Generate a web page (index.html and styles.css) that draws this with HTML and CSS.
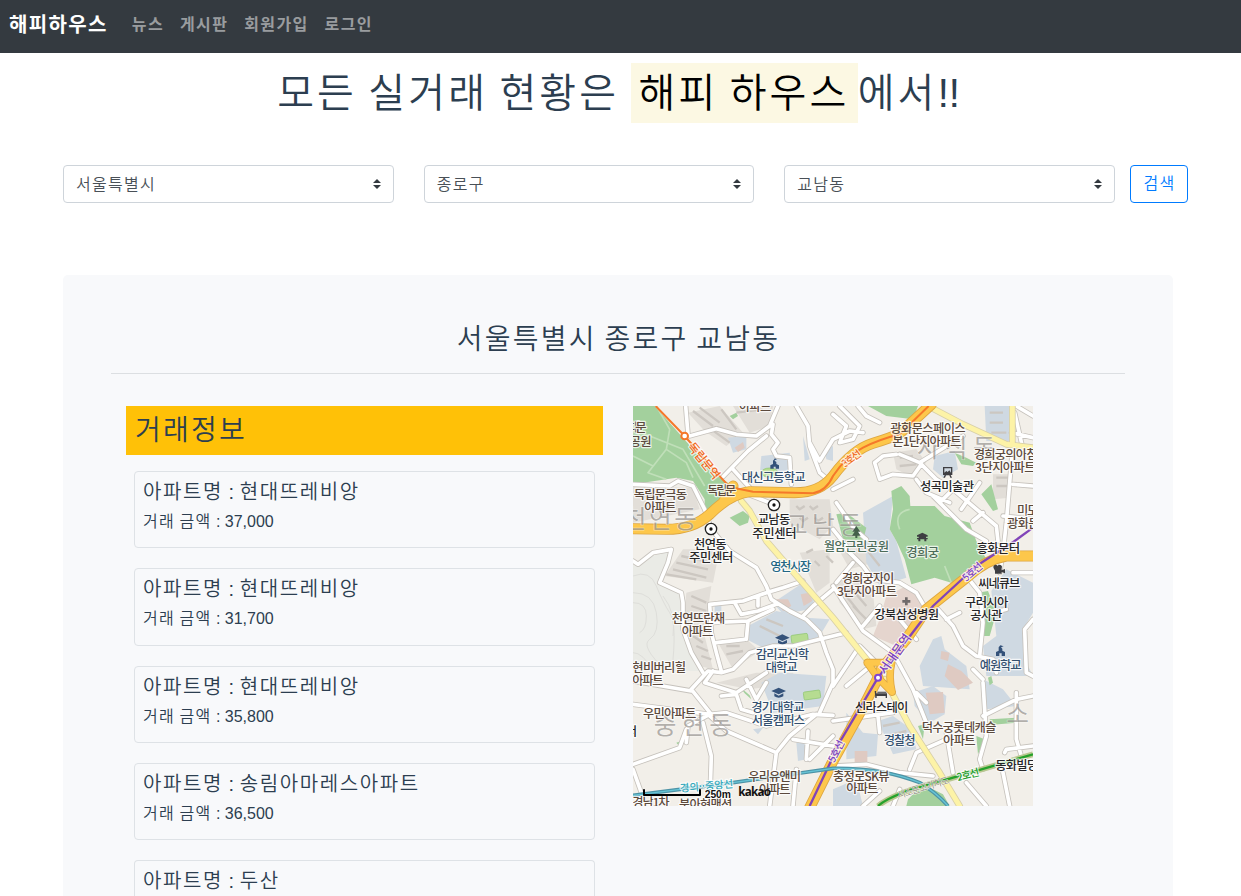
FILE: index.html
```html
<!DOCTYPE html>
<html lang="ko">
<head>
<meta charset="utf-8">
<title>해피하우스</title>
<link rel="stylesheet" href="styles.css">
</head>
<body>
<nav class="navbar">
  <a class="brand">해피하우스</a>
  <ul class="nav-list"><li>뉴스</li><li>게시판</li><li>회원가입</li><li>로그인</li></ul>
</nav>
<main class="container">
  <h1 class="headline"><span class="ko">모든</span> <span class="ko">실거래</span> <span class="ko">현황은</span> <mark class="mark"><span class="ko">해피</span> <span class="ko">하우스</span></mark><span class="ko">에서</span>!!</h1>
  <form class="search">
    <div class="select"><span class="ko">서울특별시</span><svg class="caret" viewBox="0 0 4 5"><path d="M2 0L0 2h4zm0 5L0 3h4z"/></svg></div>
    <div class="select"><span class="ko">종로구</span><svg class="caret" viewBox="0 0 4 5"><path d="M2 0L0 2h4zm0 5L0 3h4z"/></svg></div>
    <div class="select"><span class="ko">교남동</span><svg class="caret" viewBox="0 0 4 5"><path d="M2 0L0 2h4zm0 5L0 3h4z"/></svg></div>
    <button class="btn" type="button"><span class="ko">검색</span></button>
  </form>
  <section class="panel">
    <h2 class="region"><span class="ko">서울특별시</span> <span class="ko">종로구</span> <span class="ko">교남동</span></h2>
    <div class="columns">
      <div class="deals">
        <h3 class="deals-title"><span class="ko">거래정보</span></h3>
        <article class="card"><h4><span class="ko">아파트명</span> : <span class="ko">현대뜨레비앙</span></h4><p><span class="ko">거래</span> <span class="ko">금액</span> : 37,000</p></article>
        <article class="card"><h4><span class="ko">아파트명</span> : <span class="ko">현대뜨레비앙</span></h4><p><span class="ko">거래</span> <span class="ko">금액</span> : 31,700</p></article>
        <article class="card"><h4><span class="ko">아파트명</span> : <span class="ko">현대뜨레비앙</span></h4><p><span class="ko">거래</span> <span class="ko">금액</span> : 35,800</p></article>
        <article class="card"><h4><span class="ko">아파트명</span> : <span class="ko">송림아마레스아파트</span></h4><p><span class="ko">거래</span> <span class="ko">금액</span> : 36,500</p></article>
        <article class="card last"><h4><span class="ko">아파트명</span> : <span class="ko">두산</span></h4></article>
      </div>
      <svg class="map" viewBox="0 0 1200 1200">
        <rect class="land" width="1200" height="1200"/>
        <!-- built-up blocks -->
        <g class="block">
          <path d="M165 20L260 0 330 80 280 120 215 75zM0 240L180 245 200 310 100 330 0 350zM95 510L150 430 260 430 240 530zM160 560L235 540 225 610 215 690 240 790 200 780 150 660zM600 400L700 400 720 470 650 490zM600 530L650 500 720 560 730 660 690 670 620 590zM780 140L850 130 880 170 830 210 790 190zM255 710L340 700 380 735 300 790zM1080 205L1130 205 1130 275 1080 280zM470 280L590 280 600 360 560 400 470 350zM500 440L590 430 590 530 550 560zM300 0L420 0 410 60 350 80zM250 830L370 800 480 800 490 830 350 850z"/>
        </g>
        <path class="hill" d="M0 470L60 450 115 430 80 530 150 570 150 680 200 795 0 795z"/>
        <g class="contour"><path d="M0 510Q50 490 70 540T110 620T120 760L140 795M0 560Q60 560 70 620T50 700T100 795M0 590Q40 590 40 630T20 680M0 740Q30 740 60 795M90 570Q130 620 120 690"/></g>
        <g class="water">
          <path d="M385 150L470 140 480 200 380 210zM285 95L340 90 340 130 300 140zM1055 0L1130 0 1130 105 1060 105zM905 150L965 135 975 190 930 215 900 190zM690 320L780 270 770 370 790 405 820 515 740 540 700 470zM420 590L510 530 550 570 530 610 450 625zM345 660L430 615 520 635 590 640 560 690 500 720 400 730 340 700zM245 600L265 600 265 650 245 645z"/>
          <path d="M1075 555L1120 490 1200 530 1200 620 1170 670 1175 760 1200 810 1060 810 1050 720 1090 690zM900 700L925 690 935 730 1000 780 1010 850 870 840 860 780zM840 860L900 840 940 870 935 925 890 950 845 900zM640 920L690 980 735 985 730 1050 640 1060zM735 945L780 930 835 970 850 1030 780 1045zM1050 820L1110 850 1150 900 1060 910zM600 1150L670 1120 690 1200 600 1200zM385 830L440 800 580 810 570 900 420 920zM360 970L390 965 375 985zM490 1010L515 1010 520 1060 495 1065zM510 90L530 160 515 165zM575 130L600 120 600 165 580 160z"/>
        </g>
        <g class="pink"><path d="M740 640L760 570 820 540 860 560 870 620 830 690 790 720 720 690z" opacity=".7"/><path d="M305 125L330 108 335 125 315 138zM430 580L465 580 475 600 450 615zM503 565L528 560 538 585 512 600zM925 735L950 740 945 765 922 758zM945 775L985 795 1020 830 975 852 935 810zM878 860L930 858 935 920 890 925zM665 1035L703 1035 703 1068 665 1068z"/></g>
        <g class="park">
          <path d="M0 0L65 0 250 208 300 240 240 325 215 310 215 280 180 225 130 215 0 235zM290 335L330 315 350 330 345 350 320 360zM775 255L805 240 830 270 832 300 905 300 935 330 1010 350 1030 405 1060 460 955 530 905 515 835 535 815 460 790 405 770 370 780 310zM965 140L1000 155 1030 170 1020 180 985 175zM1045 265L1075 235 1095 310 1080 315zM705 0L855 0 840 40 760 30zM610 325L640 320 700 365 690 405 630 400zM1035 560L1065 555 1090 620 1070 690 1050 690 1055 640zM1030 990L1055 1000 1035 1045zM1070 940L1150 935 1150 950 1070 957zM825 1180L850 1155 900 1150 930 1165 950 1200 820 1200zM320 842L350 868 355 880 335 862zM130 1010L145 1005 143 1025zM290 30L310 20 315 30 300 40zM1065 815L1075 810 1080 830 1070 838zM855 960L875 955 870 1000z"/>
        </g>
        <g class="parkpath"><path d="M0 70L150 130 215 240M70 0L110 70 100 130 45 200 100 220M100 130L160 170 180 215M0 150L60 180M830 310Q780 320 800 370M935 480L955 530"/></g>
        <g class="field"><rect x="475" y="685" width="50" height="26" rx="4" transform="rotate(-8 500 698)"/><rect x="512" y="855" width="50" height="24" rx="4" transform="rotate(-8 537 867)"/><ellipse cx="410" cy="200" rx="25" ry="14"/></g>
        <!-- apartment buildings -->
        <g class="bldg"><path d="M180 15L240 60M200 5L260 50M235 70L290 110M265 10L310 70M120 490L220 515M130 470L225 490M145 450L235 470M100 505L190 520M175 570L220 590M175 600L220 615M170 630L215 650M165 655L205 680M180 690L210 710M190 720L225 735M205 750L235 760M620 545L680 620M640 530L700 600M660 600L710 650M800 155L840 150M800 180L850 175M380 660L440 690M400 640L450 660M490 300L500 310 515 300M530 300L540 310 555 300M500 335L510 345 525 335M545 335L555 345 570 335M545 465L560 480M580 450L600 470M520 440L540 430M1090 215L1125 215M1090 240L1125 240M1070 20L1110 20M1070 50L1110 50M1075 80L1120 80M640 425L680 470M700 430L740 480M750 960L800 950M760 990L820 975M775 1015L835 1005M20 270L80 270M100 265L160 270M280 720L320 720M280 745L330 735M310 20L390 10"/></g>
        <!-- minor roads: casing, then surface -->
        <defs><path id="roads" d="M158 0L165 85M170 90L250 68 310 85 370 90 410 60 435 0M420 55L415 85 435 110 420 130 430 150 470 155 475 235M490 0L525 60 530 120 560 200 590 225M530 110L560 165 600 100 650 75 690 80M270 212L345 135 400 90M300 190L350 245M345 265L410 290M0 235L110 240 135 225 180 240 215 310 235 370 290 435M0 465L15 475 60 440 115 430 105 470 80 530 145 560 150 590 150 670 175 740 210 800M290 435L370 485 400 540 415 580 470 615 520 640 560 680 580 740 600 790 600 830 560 920M230 595L330 585 400 560 450 545 510 525M305 590L325 625 375 615 430 595M375 570L375 600M230 595L235 680 250 740 265 795M235 650L345 645 420 610M345 645L340 700M250 710L335 700M510 630L540 600 600 550M640 680L560 700 480 720 420 720 350 740 300 790 265 800 225 795 175 850 235 925M640 430L690 480 720 520 800 530 850 560 880 610M600 540L690 675 780 740 840 850 880 950M610 530L660 470M690 660L740 600M915 610L960 660 990 720 1030 750 1080 760 1090 800M1040 750L1050 650 1040 560 1000 510M940 640L980 620M1200 640L1175 670 1180 800 1200 810M600 25L640 60 620 110 660 100 680 60 620 0M675 0L700 30 740 50M725 170L750 150 790 145M725 170L740 220 780 205 840 210 865 175M860 170L910 220 960 250 1090 360 1095 405M800 145L860 170 990 90M850 220L880 260 950 290M900 270L1000 370 1060 405M920 290L960 250M985 310L1040 230M1020 345L1050 320M1140 110L1130 230 1120 350 1110 440M1145 20L1170 130M1140 235L1200 240M1110 330L1200 340M1135 80L1200 95M600 250L660 220M610 290L665 370 700 400M600 370L640 420M0 825L175 855M240 795L215 830 310 860 400 800M0 895L230 925 280 920 400 960 540 925 600 928M550 925L470 990 430 1040 410 1200M230 930L280 975 430 1040M210 950L235 1050 230 1200M160 1010L165 960 230 925M0 1075L140 1025 160 970M480 1000L600 1020M525 975L520 1060M0 1090L25 1160M265 870L310 865 325 910 360 920M600 840L680 720 740 780M340 820L370 880 400 830M600 945L780 920M700 790L640 840M735 930L740 980M830 1090L850 1040 940 1000M940 980L960 1100M1050 830L1060 990 1040 1060 1050 1090M1150 860L1150 1000 1165 1050 1170 1090M1115 1040L1120 1030 1200 1020M1050 930L1150 880 1200 870M600 1080L700 1075 800 1100 900 1110M690 1200L740 1155M490 1090L480 1200M1000 1130L1060 1200M1110 1100L1130 1200M1080 620L1120 610M780 1200L800 1150M1140 500L1200 500M1110 440L1100 500M1050 820L1020 790M880 890L850 860M800 640L850 700M1150 0L1200 30M530 1060L600 990"/></defs>
        <use class="road-case" href="#roads"/><use class="road" href="#roads"/>
        <defs><path id="avenues" d="M325 285L350 315 400 405 500 520 600 635 725 790M755 820L830 960 920 1100 980 1200M885 0L990 55 1120 115 1200 125M1138 0L1138 115"/></defs>
        <use class="avenue-case" href="#avenues"/><use class="avenue" href="#avenues"/>
        <defs><path id="highway" d="M-10 368L100 370Q180 370 230 325Q290 265 350 257L480 260Q560 262 600 210Q660 130 720 112T800 82L895 -5M270 290L300 240M1210 450L1120 450Q1060 460 1000 515L880 610 820 700 745 790M735 815L700 885 600 1065 530 1205"/><path id="junction" d="M703 770L776 770Q766 810 777 858M703 770L735 815 777 858"/></defs>
        <use class="hwy-case" href="#highway"/><use class="hwy-case slim" href="#junction"/><use class="hwy" href="#highway"/><use class="hwy slim" href="#junction"/>
        <path class="line3" d="M68 0L155 90 255 205 290 243 360 257 540 262Q580 255 600 210Q640 150 690 125T800 85L887 0"/>
        <path class="line5" d="M1200 365L1145 405 1030 480 900 600 735 815 625 1000 530 1200"/>
        <path class="rail-case" d="M0 1168L300 1130 600 1087Q750 1085 860 1130Q910 1160 945 1200"/><path class="rail" d="M0 1168L300 1130 600 1087Q750 1085 860 1130Q910 1160 945 1200"/>
        <path class="line2-case" d="M735 1200Q780 1160 950 1118L1200 1045"/><path class="line2" d="M735 1200Q780 1160 950 1118L1200 1045"/>
        <circle class="st3" cx="155" cy="90" r="10"/><circle class="st5" cx="735" cy="815" r="9"/>
        <!-- district names -->
        <g class="district">
          <text x="-28" y="365" textLength="220">천연동</text><text x="456" y="385" textLength="230">교남동</text><text x="852" y="153" textLength="235">사직동</text><text x="62" y="983" textLength="235">중현동</text><text x="1120" y="951">소</text>
        </g>
        <g class="icons">
          <path class="navy" d="M412 188V178L420 174V164L425 158V157L432 160 425 163V164L430 168V174L438 178V188H428V182H422V188z"/>
          <path class="navy" d="M1089 750V738L1097 734V724L1102 718 1112 721 1104 724 1108 728V734L1116 738V750H1106V742H1099V750z"/>
          <path class="navy" d="M426 695L448 685 470 695 448 705zM435 702V711Q448 719 462 711V702L448 709z"/>
          <path class="navy" d="M415 855L437 845 459 855 437 865zM424 862V871Q437 879 451 871V862L437 869z"/>
          <path class="tree" d="M670 360L658 377H665L657 389H667V396H673V389H683L675 377H682z"/>
          <path class="dark" fill-rule="evenodd" d="M868 380L884 388V392H852V388zM857 392H879V396H884V400H880V406H874V400H862V406H856V400H852V396H857z"/>
          <path class="dark" fill-rule="evenodd" d="M930 183H958V207H953L957 215H952L949 208H939L936 215H931L935 207H930zM934 187V200L940 195 944 198 949 193 954 200V187z"/>
          <path class="dark" d="M1082 487a7 7 0 1 1 12 0 7 7 0 1 1 12 0L1106 493 1116 489V502L1106 498V503H1086V494z"/>
          <path class="grey" d="M816 574H824V582H832V590H824V598H816V590H808V582H816z"/>
          <path class="dark" d="M725 855H729V862H762V876H758V870H731V876H727zM733 857H760V860H733z"/>
          <circle class="pin" cx="423" cy="297" r="17"/><circle class="dot" cx="423" cy="297" r="5"/>
          <circle class="pin" cx="234" cy="369" r="17"/><circle class="dot" cx="234" cy="369" r="5"/>
        </g>
        <g class="lbl brown">
          <text x="318" y="14" textLength="97">아파트</text><text x="-32" y="79" textLength="73">서대문</text><text x="-10" y="119" textLength="66">공원</text>
          <text x="2" y="278" textLength="160">독립문극동</text><text x="34" y="317" textLength="96">아파트</text>
          <text x="772" y="80" textLength="226">광화문스페이스</text><text x="778" y="119" textLength="208">본1단지아파트</text>
          <text x="1022" y="159" textLength="192">경희궁의아침</text><text x="1026" y="198" textLength="182">3단지아파트</text>
          <text x="1152" y="326" textLength="64">미도</text><text x="1122" y="365" textLength="98">광화문</text>
          <text x="116" y="651" textLength="160">천연뜨란채</text><text x="146" y="690" textLength="95">아파트</text>
          <text x="-2" y="797" textLength="161">현비버리힐</text><text x="-2" y="836" textLength="94">아파트</text>
          <text x="30" y="935" textLength="160">우민아파트</text><text x="626" y="530" textLength="158">경희궁자이</text><text x="612" y="569" textLength="180">3단지아파트</text>
          <text x="866" y="979" textLength="224">덕수궁롯데캐슬</text><text x="930" y="1017" textLength="98">아파트</text>
          <text x="346" y="1125" textLength="158">우리유앤미</text><text x="378" y="1163" textLength="95">아파트</text>
          <text x="600" y="1124" textLength="170">충정로SK뷰</text><text x="640" y="1162" textLength="96">아파트</text>
          <text x="-2" y="1203" textLength="112">경남1차</text><text x="138" y="1209" textLength="160">북아현맨션</text>
          <text x="223" y="267" textLength="87">독립문</text>
        </g>
        <g class="lbl black">
          <text x="374" y="355" textLength="98">교남동</text><text x="358" y="395" textLength="133">주민센터</text><text x="183" y="428" textLength="98">천연동</text><text x="168" y="468" textLength="133">주민센터</text>
          <text x="861" y="255" textLength="162">성곡미술관</text><text x="1031" y="441" textLength="130">흥화문터</text><text x="1036" y="545" textLength="126">씨네큐브</text><text x="996" y="602" textLength="130">구러시아</text><text x="1012" y="641" textLength="96">공사관</text>
          <text x="724" y="638" textLength="194">강북삼성병원</text><text x="666" y="918" textLength="160">신라스테이</text><text x="1087" y="1091" textLength="160">동화빌딩앞</text><text x="-22" y="990">서</text>
        </g>
        <g class="lbl blue">
          <text x="326" y="227" textLength="192">대신고등학교</text><text x="368" y="760" textLength="160">감리교신학</text><text x="398" y="799" textLength="96">대학교</text><text x="355" y="917" textLength="160">경기대학교</text><text x="356" y="957" textLength="160">서울캠퍼스</text><text x="1040" y="791" textLength="126">예원학교</text><text x="752" y="1017" textLength="96">경찰청</text>
        </g>
        <g class="lbl teal"><text x="412" y="495" textLength="122">영천시장</text></g>
        <g class="lbl green"><text x="572" y="435" textLength="196">월암근린공원</text><text x="820" y="454" textLength="98">경희궁</text></g>
        <g class="lbl">
          <text class="line-name o" transform="translate(162 122) rotate(51)" textLength="130">독립문역</text>
          <text class="line-name o2" transform="translate(636 185) rotate(-36)" textLength="64">3호선</text>
          <text class="line-name p" transform="translate(1000 528) rotate(-41)" textLength="68">5호선</text>
          <text class="line-name p" transform="translate(757 808) rotate(-55)" textLength="138">서대문역</text>
          <text class="line-name p" transform="translate(604 1072) rotate(-63)" textLength="70">5호선</text>
          <text class="line-name g" transform="translate(975 1125) rotate(-14)" textLength="68">2호선</text>
          <text class="line-name c" transform="translate(142 1158) rotate(-5)" textLength="160">경의··중앙선</text>
          <text class="line-name gray" transform="translate(796 1178) rotate(-17)" textLength="162">서소문고가차도</text>
        </g>
        <path class="scale" d="M33 1150V1167H201V1150"/>
        <text class="scale-text" x="215" y="1176" textLength="79" lengthAdjust="spacingAndGlyphs">250m</text><text class="logo" x="316" y="1171" textLength="98">kakao</text>
      </svg>
    </div>
  </section>
</main>
</body>
</html>
```
FILE: styles.css
```css
* { box-sizing: border-box; }
html { height: 100%; overflow: hidden; }
body {
  margin: 0;
  height: 896px;
  overflow: hidden;
  background: #fff;
  color: #2c3e50;
  font: 16px/24px "Liberation Sans", "Noto Sans CJK KR", sans-serif;
}
h1, h2, h3, h4, p, ul { margin: 0; padding: 0; font-weight: 400; }
.ko { font-family: "Noto Sans CJK KR", sans-serif; font-weight: 350; letter-spacing: 0.08em; line-height: 1; }
.navbar {
  display: flex;
  align-items: center;
  height: 53px;
  padding: 0 8px 5px 9px;
  background: #343a40;
  font-family: "Noto Sans CJK KR", sans-serif;
  font-weight: 700;
  letter-spacing: 0.085em;
}
.brand { margin-right: 16px; color: #fff; font-size: 20px; }
.nav-list { display: flex; list-style: none; color: #999c9f; font-weight: 700; }
.nav-list li { padding: 0 8px; line-height: 22px; margin-bottom: 2px; }
.container { width: 1140px; margin-left: 48px; padding: 10px 15px 0; }
.headline { height: 60px; padding-left: 1px; font-size: 40px; line-height: 60px; text-align: center; white-space: nowrap; }
.mark { display: inline-block; height: 60px; padding: 0 8px; background: #fcf8e3; color: #000; }
.search { display: flex; margin: 42px -15px 0 0; }
.select {
  display: flex;
  align-items: center;
  justify-content: space-between;
  flex: none;
  width: 330.67px;
  height: 38px;
  margin-right: 30px;
  padding: 0 12px;
  border: 1px solid #ced4da;
  border-radius: 4px;
  color: #495057;
}
.select .ko { margin-bottom: 3px; }
.select:nth-child(3) { margin-right: 15px; }
.caret { width: 8px; height: 10px; fill: #343a40; }
.btn {
  width: 58px;
  height: 38px;
  padding: 0 0 0 1px;
  border: 1px solid #007bff;
  border-radius: 4px;
  background: #fff;
  color: #007bff;
  font: inherit;
}
.panel { height: 680px; margin-top: 72px; padding: 40px 48px; border-radius: 5px; background: #f8f9fb; }
.region { height: 59px; padding-top: 2px; padding-left: 1px; border-bottom: 1px solid #dcdfe2; font-size: 28px; line-height: 46px; text-align: center; }
.columns { display: flex; gap: 30px; padding: 32px 15px 0; }
.deals { width: 477px; }
.deals-title { height: 49px; margin-bottom: 16px; padding: 2px 0 0 9px; background: #ffc107; font-size: 28px; line-height: 46px; }
.card { height: 77.25px; margin: 0 8px 20px; padding: 8px 8px; border: 1px solid #dee2e6; border-radius: 4px; }
.card.last { height: 40px; border-bottom: 0; margin-bottom: 0; }
.card h4 { font-size: 20px; line-height: 24px; }
.card p { margin-top: 6px; }

.map { width: 400px; height: 400px; flex: none; overflow: hidden; }
.map path { stroke-linejoin: round; }
.land { fill: #f2efe9; }
.block { fill: #e2ded8; }
.hill { fill: #eaebe6; }
.contour, .parkpath { fill: none; stroke: #dededa; stroke-width: 3; }
.parkpath { stroke: #c0dfb9; stroke-width: 5; }
.water { fill: #cfd9e2; }
.pink { fill: #dfcac2; }
.park { fill: #a3d09d; }
.field { fill: #b6dc91; stroke: #8cc56c; stroke-width: 2; }
.bldg { fill: none; stroke: #ccc7c1; stroke-width: 7; }
.road-case, .road, .avenue-case, .avenue, .hwy-case, .hwy { fill: none; stroke-linejoin: round; stroke-linecap: round; }
.road-case { stroke: #c6c2bc; stroke-width: 16; }
.road { stroke: #fff; stroke-width: 11; }
.avenue-case { stroke: #d7cfa9; stroke-width: 20; }
.avenue { stroke: #fdf3a7; stroke-width: 15; }
.hwy-case { stroke: #dda642; stroke-width: 33; }
.hwy { stroke: #fdc74b; stroke-width: 28; }
.hwy-case.slim { stroke-width: 23; }
.hwy.slim { stroke-width: 18; }
.line3, .line5, .rail-case, .rail, .line2-case, .line2 { fill: none; }
.line3 { stroke: #f5782a; stroke-width: 6; }
.line5 { stroke: #8144b8; stroke-width: 7; }
.rail-case { stroke: #4d93a6; stroke-width: 11; }
.rail { stroke: #66c5d6; stroke-width: 4; }
.line2-case { stroke: #b9c790; stroke-width: 17; }
.line2 { stroke: #26a22b; stroke-width: 7; }
.st3, .st5 { fill: #fff; stroke: #f5782a; stroke-width: 6; }
.st5 { stroke: #8144d0; }
.district { font: 400 74px "Noto Sans CJK KR", sans-serif; fill: #85817c; fill-opacity: 0.6; stroke: #fff; stroke-width: 3; stroke-opacity: 0.5; paint-order: stroke; }
.navy { fill: #34527a; }
.tree { fill: #43604a; }
.dark { fill: #3e3e42; }
.grey { fill: #706a6a; }
.pin { fill: #fff; stroke: #222; stroke-width: 4; }
.dot { fill: #111; }
.lbl { font: 500 37px "Noto Sans CJK KR", sans-serif; stroke: #fff; stroke-width: 7; stroke-opacity: 0.75; stroke-linejoin: round; paint-order: stroke; }
.brown { fill: #5c4a3d; }
.black { fill: #262628; }
.blue { fill: #34506f; }
.teal { fill: #226785; }
.green { fill: #4c6b58; }
.line-name { font-size: 31px; font-weight: 500; }
.o { fill: #f06a1e; font-size: 36px; }
.o2 { fill: #f06a1e; }
.p { fill: #7a3fc0; }
.p[textLength="138"] { font-size: 37px; }
.g { fill: #189a26; }
.c { fill: #35aabd; }
.gray { fill: #979183; stroke-width: 3; font-size: 28px; font-weight: 400; }
.scale { fill: none; stroke: #000; stroke-width: 6; }
.scale-text { font: 700 30px "Liberation Sans", sans-serif; fill: #111; stroke: #fff; stroke-width: 5; paint-order: stroke; }
.logo { font: 700 35px "Open Sans", sans-serif; fill: #111; }
```
